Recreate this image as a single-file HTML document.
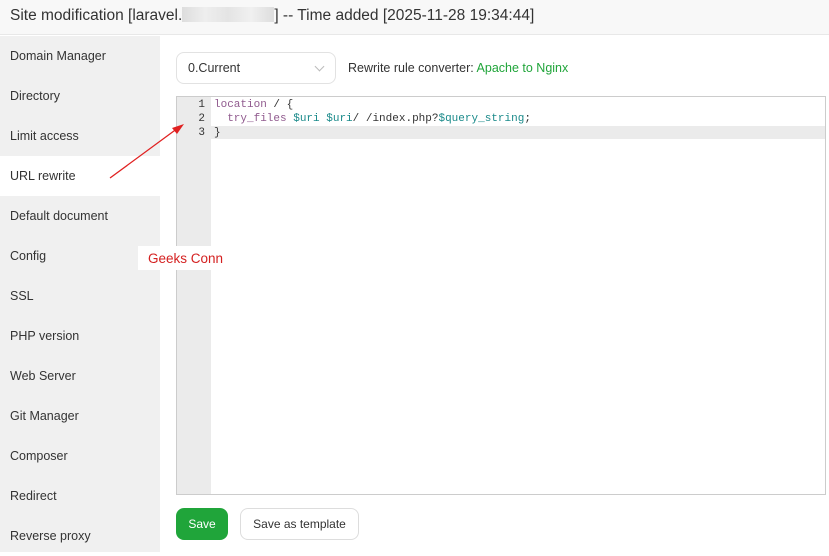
<!DOCTYPE html>
<html><head><style>
body{margin:0;width:829px;height:552px;overflow:hidden;font-family:"Liberation Sans",sans-serif;background:#fff;position:relative;color:#333}
.hdr{position:absolute;left:0;top:0;width:829px;height:35px;background:#f8f8f8;border-bottom:1px solid #e8e8e8;font-size:15.5px;line-height:32px;padding-left:10px;box-sizing:border-box;color:#333}
.blur{display:inline-block;width:92px;height:15px;background:linear-gradient(90deg,#ddd,#eee,#e4e4e4,#f0f0f0,#ddd);vertical-align:-2px}
.side{position:absolute;left:0;top:36px;width:160px;height:516px;background:#f0f0f0}
.side div{height:40px;line-height:40px;padding-left:10px;font-size:12.5px;color:#333}
.side .act{background:#fff}
.sel{position:absolute;left:176px;top:52px;border:1px solid #e2e2e2;border-radius:8px;font-size:12.5px;line-height:30px;padding-left:11px;box-sizing:border-box;width:160px;height:32px}
.sel:after{content:"";position:absolute;right:12px;top:10px;width:6px;height:6px;border-right:1px solid #bbb;border-bottom:1px solid #bbb;transform:rotate(45deg)}
.conv{position:absolute;left:348px;top:61px;font-size:12.5px}
.conv span{color:#20a53a}
.ed{position:absolute;left:176px;top:96px;width:650px;height:399px;border:1px solid #ccc;box-sizing:border-box;background:#fff}
.gut{position:absolute;left:0;top:0;width:34px;height:100%;background:#ebebeb}
.cur{position:absolute;left:0;top:29px;width:648px;height:13px;background:#ebebeb}
.code{position:absolute;left:0;top:1px;font-family:"Liberation Mono",monospace;font-size:11px;line-height:14px}
.ln{position:absolute;left:0;width:28px;text-align:right;color:#333}
.tx{position:absolute;left:37px;white-space:pre;color:#333}
.k{color:#905a8e}.v{color:#1a8a8a}
.btn1{position:absolute;left:176px;top:508px;width:52px;height:32px;background:#20a53a;border-radius:8px;color:#fff;font-size:12px;text-align:center;line-height:32px}
.btn2{position:absolute;left:240px;top:508px;width:119px;height:32px;border:1px solid #ddd;border-radius:8px;box-sizing:border-box;font-size:12px;text-align:center;line-height:30px}
.gc{position:absolute;left:138px;top:246px;width:98px;height:24px;background:#fff;color:#d42020;font-size:13.5px;line-height:25px;padding-left:10px;box-sizing:border-box}
</style></head><body>
<div class="hdr">Site modification [laravel.<span class="blur"></span>] -- Time added [2025-11-28 19:34:44]</div>
<div class="side">
<div>Domain Manager</div><div>Directory</div><div>Limit access</div><div class="act">URL rewrite</div><div>Default document</div><div>Config</div><div>SSL</div><div>PHP version</div><div>Web Server</div><div>Git Manager</div><div>Composer</div><div>Redirect</div><div>Reverse proxy</div>
</div>
<div class="sel">0.Current</div>
<div class="conv">Rewrite rule converter: <span>Apache to Nginx</span></div>
<div class="ed"><div class="gut"></div><div class="cur"></div>
<div class="code">
<div class="ln" style="top:0">1</div><div class="tx" style="top:0"><span class="k">location</span> / {</div>
<div class="ln" style="top:14px">2</div><div class="tx" style="top:14px">  <span class="k">try_files</span> <span class="v">$uri</span> <span class="v">$uri</span>/ /index.php?<span class="v">$query_string</span>;</div>
<div class="ln" style="top:28px">3</div><div class="tx" style="top:28px">}</div>
</div></div>
<div class="btn1">Save</div>
<div class="btn2">Save as template</div>
<div class="gc">Geeks Conn</div>
<svg style="position:absolute;left:0;top:0" width="829" height="552"><line x1="110" y1="178" x2="178" y2="128" stroke="#e02020" stroke-width="1.3"/><polygon points="184,124 172,128 177,134" fill="#e02020"/></svg>
</body></html>
